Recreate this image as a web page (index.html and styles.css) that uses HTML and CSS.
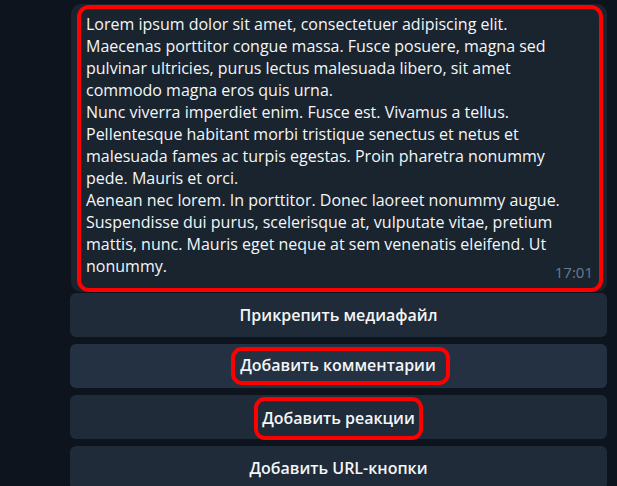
FILE: index.html
```html
<!DOCTYPE html>
<html lang="ru">
<head>
    <meta charset="utf-8">
    <title>Message</title>
    <link rel="stylesheet" href="styles.css">
</head>
<body>
    <div class="chat">
        <div class="bubble">
            <div class="mark mark-msg">
                <div class="msg-text">Lorem ipsum dolor sit amet, consectetuer adipiscing elit. Maecenas porttitor congue massa. Fusce posuere, magna sed pulvinar ultricies, purus lectus malesuada libero, sit amet commodo magna eros quis urna.<br>Nunc viverra imperdiet enim. Fusce est. Vivamus a tellus.<br>Pellentesque habitant morbi tristique senectus et netus et malesuada fames ac turpis egestas. Proin pharetra nonummy pede. Mauris et orci.<br>Aenean nec lorem. In porttitor. Donec laoreet nonummy augue.<br>Suspendisse dui purus, scelerisque at, vulputate vitae, pretium mattis, nunc. Mauris eget neque at sem venenatis eleifend. Ut nonummy.</div>
                <div class="msg-time">17:01</div>
            </div>
        </div>

        <div class="keyboard">
            <div class="kb-btn">Прикрепить медиафайл</div>
            <div class="kb-btn kb-hover"><span class="mark mark-btn">Добавить комментарии</span></div>
            <div class="kb-btn"><span class="mark mark-btn mark-tall">Добавить реакции</span></div>
            <div class="kb-btn">Добавить URL-кнопки</div>
        </div>
    </div>
</body>
</html>
```

FILE: styles.css
```css
body { margin: 0; background: #0e141d; font-family: "Open Sans", "Noto Sans", sans-serif; color: #f4f6f8; }
.chat { padding: 4px 10px 0 70px; }

.bubble { background: #19242f; border-radius: 10px; margin-left: 1px; padding: 1px 4px 0 6px; margin-bottom: 1px; }
.mark { border: 4px solid #ff0000; border-radius: 12px; }
.mark-msg { display: block; padding: 4px 6px 8px 5px; }
.msg-text { font-size: 16px; line-height: 22px; padding-right: 14px; }
.msg-time { text-align: right; font-size: 15px; line-height: 16px; color: #6b7b8b; margin-top: -13px; }

.keyboard { display: flex; flex-direction: column; gap: 7px; }
.kb-btn {
    background: #1f2b38;
    border-radius: 6px;
    height: 44px;
    display: flex;
    align-items: center;
    justify-content: center;
    font-size: 16px;
    font-weight: 600;
}
.kb-hover { background: #233142; }
.mark-btn { display: inline-block; border-radius: 11px; padding: 4px 10px 5px 5px; line-height: 21px; margin-left: 4px; }
.mark-tall { padding: 7px 4px 7px 4px; margin-top: 2px; margin-left: 0; }
```
